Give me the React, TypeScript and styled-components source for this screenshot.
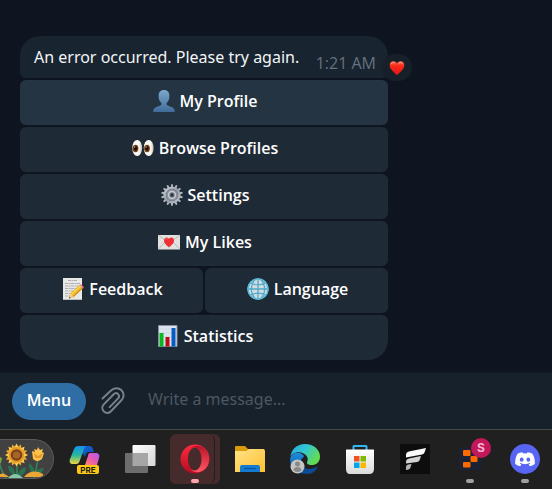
import React from 'react';
import styled, { createGlobalStyle } from 'styled-components';

const GlobalStyle = createGlobalStyle`
  * { box-sizing: border-box; }
  body { margin: 0; background: #0e1520; }
  button, input { font-family: inherit; }
`;

const Page = styled.div`
  min-height: 100vh;
  display: flex;
  flex-direction: column;
  overflow: hidden;
  background: #0e1520;
  color: #fff;
  font-family: 'Open Sans', 'Noto Sans', sans-serif;
  font-size: 16px;
`;

const Chat = styled.main`
  flex: 1;
  display: flex;
  flex-direction: column;
  justify-content: flex-end;
  padding: 12px 20px;
`;

const Message = styled.article`
  width: 100%;
  max-width: 368px;
  display: flex;
  flex-direction: column;
  gap: 2px;
`;

const Bubble = styled.div`
  position: relative;
  display: flex;
  justify-content: space-between;
  height: 42px;
  padding: 0 12px 0 14px;
  border-radius: 20px 20px 6px 6px;
  background: #182430;
  white-space: nowrap;
`;

const MessageText = styled.p`
  margin: 0;
  font-family: 'Noto Sans', 'Open Sans', sans-serif;
  line-height: 42px;
  color: #f2f5f7;
`;

const Time = styled.time`
  align-self: flex-end;
  line-height: 30px;
  color: #65727f;
`;

const Reaction = styled.button`
  position: absolute;
  right: -24px;
  bottom: -3px;
  width: 30px;
  height: 27px;
  display: grid;
  place-items: center;
  padding: 0;
  border: 0;
  border-radius: 14px;
  background: #172029;
`;

const KeyRow = styled.div`
  display: flex;
  gap: 2px;
`;

const Key = styled.button<{ $active?: boolean; $last?: boolean }>`
  flex: 1;
  height: 45px;
  display: flex;
  align-items: center;
  justify-content: center;
  gap: 5px;
  padding: 0 0 3px 2px;
  border: 0;
  border-radius: ${p => (p.$last ? '6px 6px 20px 20px' : '6px')};
  background: ${p => (p.$active ? '#243442' : '#1e2a36')};
  color: #fff;
  font-size: 16px;
  font-weight: 600;
`;

const Composer = styled.form`
  display: flex;
  align-items: center;
  height: 57px;
  padding: 0 12px;
  background: #17212b;
  border-top: 1px solid #111a23;
`;

const MenuButton = styled.button`
  width: 74px;
  height: 37px;
  padding: 0 0 2px;
  border: 0;
  border-radius: 19px;
  background: #2f6ea5;
  color: #fff;
  font-size: 16px;
  font-weight: 600;
`;

const AttachButton = styled.button`
  display: grid;
  place-items: center;
  width: 30px;
  height: 32px;
  margin: 0 20px 0 12px;
  padding: 0;
  border: 0;
  background: none;
`;

const MessageInput = styled.input`
  flex: 1;
  min-width: 0;
  padding: 0 0 4px;
  border: 0;
  outline: 0;
  background: none;
  color: #fff;
  font-family: 'Noto Sans', 'Open Sans', sans-serif;
  font-size: 16px;
  &::placeholder { color: #4c5762; opacity: 1; }
`;

const Taskbar = styled.nav`
  display: flex;
  align-items: center;
  height: 60px;
  padding-bottom: 1px;
  border-top: 1px solid #484848;
  background: #202020;
`;

const Widget = styled.button`
  width: 55px;
  height: 40px;
  margin-right: 3px;
  padding: 0;
  border: 1px solid #5a5a5a;
  border-left: 0;
  border-radius: 0 20px 20px 0;
  background: #414141;
  overflow: hidden;
`;

const Task = styled.button`
  position: relative;
  flex: none;
  width: 55px;
  height: 50px;
  display: grid;
  place-items: center;
  padding: 0;
  border: 0;
  background: none;
`;

const Highlight = styled.span`
  position: absolute;
  inset: 0 2px 0 3px;
  border-radius: 6px;
  background: #462b2c;
  &::after {
    content: '';
    position: absolute;
    inset: 0 5px 0 0;
    border-right: 1px solid #241d1d;
    border-radius: 6px;
  }
`;

const Indicator = styled.span<{ $pink?: boolean }>`
  position: absolute;
  bottom: 1px;
  left: 24px;
  width: 8px;
  height: 4px;
  border-radius: 2px;
  background: ${p => (p.$pink ? '#ffa6ad' : '#a0a0a0')};
`;

const AccountBadge = styled.span`
  position: absolute;
  top: 4px;
  right: 6px;
  width: 20px;
  height: 20px;
  border-radius: 50%;
  background: #c2185b;
  color: #f7b3cf;
  font: 700 12px/20px 'Inter', sans-serif;
`;

const Icon = styled.svg`
  position: relative;
  display: block;
  flex: none;
`;

const Heart = () => (
  <Icon width="16" height="16" viewBox="0 0 16 16">
    <defs><linearGradient id="heart" x2="0" y2="1"><stop stopColor="#ff6852" /><stop offset=".35" stopColor="#fb2919" /><stop offset="1" stopColor="#e51418" /></linearGradient></defs>
    <path d="M8 15C5.600 12.800.7 9.300.7 5.200.7 2.700 2.200 1.200 4.300 1.200 6 1.200 7.300 2.100 8 3.500c.7-1.400 2-2.300 3.700-2.300 2.100 0 3.600 1.500 3.600 4C15.300 9.300 10.400 12.800 8 15z" fill="url(#heart)" />
    <path d="M2.300 3.600q1-1.400 2.700-1M10 3q1.500-1 3 0" stroke="#ffa08c" fill="none" strokeLinecap="round" />
  </Icon>
);

const Person = () => (
  <Icon width="22" height="22" viewBox="0 0 22 22">
    <defs><linearGradient id="person" x2="0" y2="1"><stop stopColor="#7ba8ca" /><stop offset="1" stopColor="#416b9a" /></linearGradient></defs>
    <path d="M11 0c3.700 0 5.600 2.500 5.400 6.200-.1 3.200-1 5.200-2.700 6.600v2c1 1.600 7.400 1.600 8 5.400V22H.3v-1.800c.6-3.800 7-3.800 8-5.400v-2C6.600 11.400 5.700 9.400 5.600 6.200 5.400 2.500 7.300 0 11 0z" fill="url(#person)" />
  </Icon>
);

const Eyes = () => (
  <Icon width="22" height="22" viewBox="0 0 22 22">
    <defs><linearGradient id="eye"><stop stopColor="#fff" /><stop offset=".7" stopColor="#faf7f3" /><stop offset="1" stopColor="#c7bdb4" /></linearGradient></defs>
    {[5.2, 16.7].map(x => (
      <g key={x}>
        <ellipse cx={x} cy="11" rx="4.900" ry="8" fill="url(#eye)" />
        <ellipse cx={x - 1.700} cy="11.500" rx="2.900" ry="3.700" fill="#754016" />
        <ellipse cx={x - 1.700} cy="11.300" rx="1.700" ry="2.200" fill="#1c0d08" />
        <circle cx={x - 2.600} cy="10" r=".7" fill="#dbb184" />
      </g>
    ))}
  </Icon>
);

const Gear = () => (
  <Icon width="22" height="22" viewBox="0 0 22 22">
    <defs><linearGradient id="gear" x2="1" y2="1"><stop stopColor="#c8ced6" /><stop offset=".5" stopColor="#949ba6" /><stop offset="1" stopColor="#bbc1c9" /></linearGradient></defs>
    {Array.from({ length: 14 }, (_, i) => (
      <path key={i} d="M9.800 4.500 10.200.2h1.600l.4 4.300z" fill="#b4bac3" transform={`rotate(${i * 360 / 14} 11 11)`} />
    ))}
    <circle cx="11" cy="11" r="7.300" fill="none" stroke="url(#gear)" strokeWidth="2.600" />
    <circle cx="11" cy="11" r="6" fill="#8a919c" />
    <circle cx="11" cy="11" r="3.400" fill="#69727d" stroke="#c7ccd2" strokeWidth="1.500" />
    <circle cx="11" cy="11" r="1.500" fill="#25303a" />
  </Icon>
);

const LoveLetter = () => (
  <Icon width="22" height="22" viewBox="0 0 22 22">
    <path d="M0 4h22v14.500H0z" fill="#e1e1df" />
    <path d="m0 4 11 8 11-8M0 18.500 8 10m14 8.500L14 10" stroke="#b9babc" fill="none" />
    <path d="M11 16.500c-1.500-1.700-5-3.700-5-7 0-3.300 3.700-3.900 5-1.400 1.300-2.500 5-1.900 5 1.400 0 3.300-3.500 5.300-5 7z" fill="#ef3037" />
    <path d="M7.500 8q1-1.200 2 0" stroke="#ff8784" fill="none" />
  </Icon>
);

const Memo = () => (
  <Icon width="22" height="22" viewBox="0 0 22 22">
    <path d="M1 0h19v22H1z" fill="#e8e8e6" />
    <path d="M1 21.500h19" stroke="#bdbdbd" />
    <path d="M6 2.500h9M3 5.500h15M3 8h14M3 10.500h12M3 13h10M3 15.500h6M3 18h5" stroke="#a6a8aa" strokeWidth=".9" strokeDasharray="3 .6 2 .4" />
    <path d="m7 20.500 1.300-5L17.500 7l3.500 3.300-9.200 8.700z" fill="#edb329" />
    <path d="m9 17 9.500-8.900" stroke="#ffda53" strokeWidth="1.300" />
    <path d="m11 19 9-8.600" stroke="#c58019" />
    <path d="m7 20.500 1.300-5 3.500 3.500z" fill="#efca91" /><path d="m7 20.500.5-1.800 1.200 1.300z" fill="#35312d" />
    <path d="m17.500 7 1.200-1 3.200 3.300-.9 1z" fill="#ef7f91" />
  </Icon>
);

const Globe = () => (
  <Icon width="22" height="22" viewBox="0 0 22 22">
    <circle cx="11" cy="11" r="10.500" fill="#d2dce1" />
    <path d="M11 .5v21M.5 11h21M3 4.800q8 4 16 0M3 17.200q8-4 16 0M8.500 1C3 7 3 15 8.500 21M13.500 1c5.500 6 5.500 14 0 20" stroke="#4fa9c9" strokeWidth="1.300" fill="none" />
    <circle cx="11" cy="11" r="10" stroke="#58b8d8" strokeWidth="1.500" fill="none" />
  </Icon>
);

const Chart = () => (
  <Icon width="22" height="22" viewBox="0 0 22 22">
    <path d="M1.500.5h18.500v21H1.500z" fill="#dce5ef" stroke="#87919c" />
    <path d="M2 4h18M2 8h18M2 12h18M2 16h18" stroke="#c7d2df" strokeWidth=".7" />
    <path d="M2.500 8h4v13.500h-4z" fill="#06b91f" /><path d="M8.500 12h4v9.500h-4z" fill="#bd0b18" /><path d="M14.500 3h4v18.500h-4z" fill="#075bc1" />
  </Icon>
);

const Clip = () => (
  <Icon width="24" height="28" viewBox="0 0 24 28" fill="none" stroke="#76818a" strokeWidth="2" strokeLinecap="round">
    <path d="M1.500 11.500 10 3.500c3-3 7.500-3 10.300-.4 3 2.900 3 7.300.1 10.200L10 24.300c-2 2.100-5 2.100-7.100.2-2.100-2-2.100-5-.1-7.100L12.700 7.200c1.300-1.300 3.200-1.300 4.400-.1 1.200 1.200 1.200 3 0 4.300l-8.500 8.700" />
  </Icon>
);

const Flowers = () => (
  <Icon width="54" height="38" viewBox="0 0 54 38">
    <path d="M17 22v16M38 18q-1 8-4 20M-1 21q2 10 7 17" stroke="#35885c" strokeWidth="1.500" fill="none" />
    <path d="M16 36Q14 25 8 26q0 7 8 10m1 1q2-9 9-10 0 8-9 10M34 37q-6-9-5-14 7 4 5 14m0 0q1-9 10-9-2 7-10 9" fill="#28734f" />
    <path d="M-2 37q3-7 11 0m15 0q8-9 19-3v3" fill="#eba637" /><path d="M8 38q7-8 15 0" fill="#85c7a4" />
    {Array.from({ length: 16 }, (_, i) => <path key={i} d="M13.500 9 16.500 3.500 19.500 9z" fill={i % 2 ? '#ecac2d' : '#ffcf55'} transform={`rotate(${i * 22.5} 16.500 15)`} />)}
    <circle cx="16.500" cy="15" r="7.800" fill="#e89a25" /><circle cx="16.500" cy="15" r="5.800" fill="#7c4219" /><circle cx="16.500" cy="15" r="3.600" fill="#a8652a" />
    <path d="m32 11 3 1-1-3 3 1 1-3 2 3 3-1-1 3 2 1-2 6q-5 4-9 0z" fill="#ffc24a" /><path d="m34 13 4 3 5-3-2 5h-6z" fill="#e39a2c" />
    <path d="m-2 16 4 2-1 5-3 1z" fill="#74a83d" />
  </Icon>
);

const Copilot = () => (
  <Icon width="32" height="32" viewBox="0 0 32 32">
    <defs>
      <linearGradient id="copA" x2="0" y2="1"><stop stopColor="#1692ed" /><stop offset=".5" stopColor="#26b69d" /><stop offset="1" stopColor="#f1d83e" /></linearGradient>
      <linearGradient id="copB" x2="1" y2="1"><stop stopColor="#146ce0" /><stop offset="1" stopColor="#1546ac" /></linearGradient>
      <linearGradient id="copC" x1="1" x2="0" y2="1"><stop stopColor="#a95ff5" /><stop offset=".5" stopColor="#e858b6" /><stop offset="1" stopColor="#ff8b5d" /></linearGradient>
    </defs>
    <path d="M9 3h11c3 0 4 2 5 6h-4c-4 0-4 2-5 5z" fill="url(#copB)" />
    <path d="M9 3h8c-2 1-2 3-3 6l-3 8c-1 3-2 4-4 4H4c-3 0-4-2-3-5l4-10c1-2 2-3 4-3z" fill="url(#copA)" />
    <path d="M21 10h5c4 0 5 2 4 5l-2 7H16l3-9c0-2 1-3 2-3z" fill="url(#copC)" />
    <rect x="8" y="22" width="22" height="9" rx="2" fill="#ffc815" />
    <text x="19" y="29.500" textAnchor="middle" fontSize="8" fontWeight="700" fontFamily="Inter, sans-serif" fill="#20201b">PRE</text>
  </Icon>
);

const TaskView = () => (
  <Icon width="32" height="32" viewBox="0 0 32 32">
    <defs><linearGradient id="tv" x2="1" y2="1"><stop stopColor="#fff" /><stop offset="1" stopColor="#d5d5d5" /></linearGradient></defs>
    <rect x="8.500" y="2" width="23" height="21" rx="1" fill="url(#tv)" /><rect x="1" y="10" width="23" height="20" rx="1" fill="#6d6d6d" /><path d="M8.500 10H24v13H8.500z" fill="#a6a6a6" />
  </Icon>
);

const Opera = () => (
  <Icon width="30" height="30" viewBox="0 0 30 30">
    <defs><linearGradient id="operaL" x2="0" y2="1"><stop stopColor="#ff2b3c" /><stop offset="1" stopColor="#b70b21" /></linearGradient><linearGradient id="operaR" x2="0" y2="1"><stop stopColor="#b91329" /><stop offset="1" stopColor="#ff5865" /></linearGradient></defs>
    <path fillRule="evenodd" d="M15 .5a14.500 14.500 0 1 0 0 29 14.500 14.500 0 1 0 0-29zm0 3c4 0 6.500 5 6.500 11.500S19 26.500 15 26.500 8 21.500 8 15 11 3.500 15 3.500z" fill="url(#operaL)" />
    <path d="M10 5.200C13 1.300 18 1 22 3c5 2.500 7 7 7 12s-2 9.500-7 12c-4 2-9 1.700-12-2.200 2.500 2.200 5.500 2.100 8 .1 5-4 5-15.800 0-19.800-2.500-2-5.500-2.100-8 .1z" fill="url(#operaR)" />
  </Icon>
);

const Folder = () => (
  <Icon width="30" height="28" viewBox="0 0 30 28">
    <defs><linearGradient id="folder" x2="1" y2="1"><stop stopColor="#ffe287" /><stop offset="1" stopColor="#ffc02f" /></linearGradient></defs>
    <path d="M0 2Q0 1 1 1h9l3 3h16v7H0z" fill="#d99b0a" /><path d="M0 6h11l3-2h14q2 0 2 2v21H0z" fill="url(#folder)" />
    <path d="M5 27v-5q0-2 2-2h16q2 0 2 2v5z" fill="#137bd0" /><path d="M9 23.500h12" stroke="#0755a1" strokeWidth="1.200" />
  </Icon>
);

const Edge = () => (
  <Icon width="30" height="30" viewBox="0 0 30 30">
    <defs><linearGradient id="edge" x2="1" y2=".5"><stop stopColor="#28a9df" /><stop offset=".5" stopColor="#32c6d3" /><stop offset="1" stopColor="#64dc50" /></linearGradient><linearGradient id="edgeB" x2="0" y2="1"><stop stopColor="#218ddc" /><stop offset="1" stopColor="#0754a8" /></linearGradient></defs>
    <path d="M.3 13C1.600 5 7 0 15 0c9 0 15 6 15 12.500 0 6-4 8.500-8.500 8.500-3 0-5-1-4.500-3 2-3 0-8-6-9.500C5 7.500 2 10 .3 13z" fill="url(#edge)" />
    <path d="M.2 14C2 9 8 7.500 12 10c3 2 2 3 0 4.500-3 4-1 9.500 4 12 3 1.500 6 1 8 .5C13 33-1 28 .2 14z" fill="url(#edgeB)" />
    <path d="M12 14c-4 7 4 15 16 8.500-2 4-5 7.500-11 7.500-7-3-10-11-5-16z" fill="#0c4c95" />
    <circle cx="7.500" cy="22.500" r="7" fill="#c5c5c5" /><circle cx="7.500" cy="20" r="2.500" fill="#898989" /><path d="M3.500 26.500q0-3.500 4-3.500t4 3.500q-4 3-8 0z" fill="#898989" />
  </Icon>
);

const Store = () => (
  <Icon width="30" height="30" viewBox="0 0 30 30">
    <defs><linearGradient id="bag" x2="0" y2="1"><stop stopColor="#fff" /><stop offset="1" stopColor="#dadada" /></linearGradient></defs>
    <path d="M8.500 7V2.500Q8.500 2 9 2h12q.5 0 .5.500V7" fill="none" stroke="#32b8ec" strokeWidth="2" />
    <path d="M1.500 5.500h27q.5 0 .5.500v19q0 5-5 5H5q-4 0-4-5V6q0-.5.500-.5z" fill="url(#bag)" />
    <path d="M9 12h5.500v5.500H9z" fill="#f25022" /><path d="M15.500 12H21v5.500h-5.500z" fill="#7fba00" /><path d="M9 18.500h5.500V24H9z" fill="#00a4ef" /><path d="M15.500 18.500H21V24h-5.500z" fill="#ffb900" />
  </Icon>
);

const SlantF = () => (
  <Icon width="30" height="30" viewBox="0 0 30 30">
    <path d="M0 0h30v30H0z" fill="#0d0d0d" />
    <path d="M6 13.500V11q0-3 4-3.700L26 4l-1.500 4.500q-.5 1.600-2.500 2z" fill="#fafafa" />
    <path d="M6 19.500V18q0-3 4-3.700l11-2.200-1.300 4q-.5 1.500-2.500 1.800z" fill="#d2d2d2" />
    <path d="M6 26v-3q0-2 2-2.500l3.500-.5-1.200 4q-.5 1.500-4.300 2z" fill="#b5b5b5" />
  </Icon>
);

const Blocks = () => (
  <Icon width="22" height="22" viewBox="0 0 22 22">
    <rect width="22" height="22" rx="1" fill="#1b2233" /><g fill="#ff6a00"><rect x="4" y="2" width="7.500" height="6" rx="1" /><rect x="11.500" y="8" width="7" height="6" rx="1" /><rect x="4" y="14" width="7.500" height="5.500" rx="1" /></g>
  </Icon>
);

const Discord = () => (
  <Icon width="30" height="30" viewBox="0 0 30 30">
    <circle cx="15" cy="15" r="15" fill="#5865f2" />
    <path d="M12.500 8.200C10.500 8.500 9 9 7.800 9.600 5.500 13 5 16.500 5.200 20c1.700 1.200 3.400 1.900 5.100 2.200l1-1.900-1.600-.8.500-.4c3 1.400 6.500 1.400 9.600 0l.5.400-1.600.8 1 1.900c1.700-.3 3.400-1 5.100-2.200.3-3.500-.3-7-2.600-10.400-1.200-.6-2.700-1.100-4.700-1.400l-.6 1.200q-2-.3-3.800 0z" fill="#fff" />
    <ellipse cx="11.700" cy="15.700" rx="1.900" ry="2.100" fill="#5865f2" /><ellipse cx="18.300" cy="15.700" rx="1.900" ry="2.100" fill="#5865f2" />
  </Icon>
);

export default function App() {
  return (
    <>
      <GlobalStyle />
      <Page>
        <Chat>
          <Message>
            <Bubble>
              <MessageText>An error occurred. Please try again.</MessageText>
              <Time dateTime="01:21">1:21 AM</Time>
              <Reaction aria-label="Heart reaction"><Heart /></Reaction>
            </Bubble>
            <KeyRow><Key $active><Person />My Profile</Key></KeyRow>
            <KeyRow><Key><Eyes />Browse Profiles</Key></KeyRow>
            <KeyRow><Key><Gear />Settings</Key></KeyRow>
            <KeyRow><Key><LoveLetter />My Likes</Key></KeyRow>
            <KeyRow>
              <Key><Memo />Feedback</Key>
              <Key><Globe />Language</Key>
            </KeyRow>
            <KeyRow><Key $last><Chart />Statistics</Key></KeyRow>
          </Message>
        </Chat>
        <Composer onSubmit={e => e.preventDefault()}>
          <MenuButton type="button">Menu</MenuButton>
          <AttachButton type="button" aria-label="Attach file"><Clip /></AttachButton>
          <MessageInput aria-label="Message" placeholder="Write a message..." />
        </Composer>
        <Taskbar aria-label="Taskbar">
          <Widget aria-label="Widgets"><Flowers /></Widget>
          <Task aria-label="Copilot"><Copilot /></Task>
          <Task aria-label="Task view"><TaskView /></Task>
          <Task aria-label="Opera"><Highlight /><Opera /><Indicator $pink /></Task>
          <Task aria-label="File Explorer"><Folder /></Task>
          <Task aria-label="Edge"><Edge /></Task>
          <Task aria-label="Store"><Store /></Task>
          <Task aria-label="Editor"><SlantF /></Task>
          <Task aria-label="Blocks"><Blocks /><AccountBadge>S</AccountBadge><Indicator /></Task>
          <Task aria-label="Discord"><Discord /><Indicator /></Task>
        </Taskbar>
      </Page>
    </>
  );
}
